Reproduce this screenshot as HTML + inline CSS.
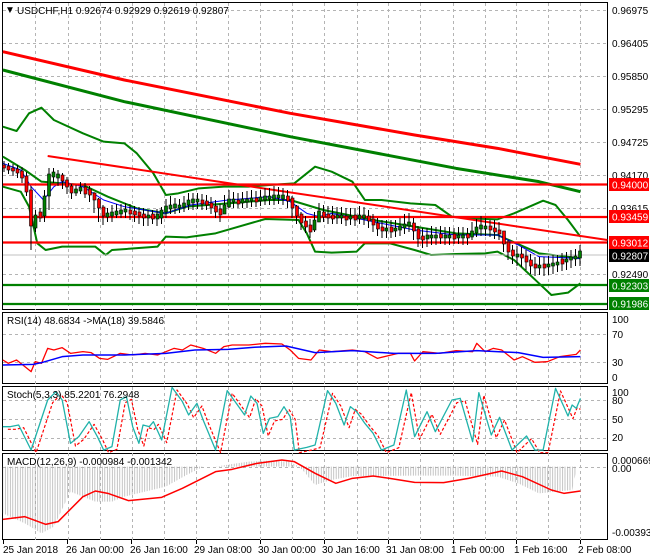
<!DOCTYPE html>
<html><head><meta charset="utf-8"><style>
html,body{margin:0;padding:0;background:#fff;}
svg{display:block;font-family:"Liberation Sans",sans-serif;}
</style></head><body>
<svg width="650" height="560" viewBox="0 0 650 560" xmlns="http://www.w3.org/2000/svg">
<defs>
<pattern id="hp" width="6" height="10" patternUnits="userSpaceOnUse"><rect x="0" y="0" width="1.6" height="10" fill="#a8a8a8"/></pattern>
</defs>
<rect width="650" height="560" fill="#fff"/>
<g fill="none" stroke="#000" stroke-width="1">
<rect x="2.5" y="2.5" width="605" height="307"/>
<rect x="2.5" y="312.5" width="605" height="71"/>
<rect x="2.5" y="386.5" width="605" height="64"/>
<rect x="2.5" y="453.5" width="605" height="86"/>
</g>
<g stroke="#b4b4b4" stroke-dasharray="3,3" stroke-width="1">
<line x1="3" x2="607" y1="10.5" y2="10.5"/><line x1="3" x2="607" y1="43.5" y2="43.5"/><line x1="3" x2="607" y1="76.5" y2="76.5"/><line x1="3" x2="607" y1="109.5" y2="109.5"/><line x1="3" x2="607" y1="142.5" y2="142.5"/><line x1="3" x2="607" y1="175.5" y2="175.5"/><line x1="3" x2="607" y1="208.5" y2="208.5"/><line x1="3" x2="607" y1="274.5" y2="274.5"/>
<line x1="3" x2="607" y1="334.5" y2="334.5"/><line x1="3" x2="607" y1="362.5" y2="362.5"/>
<line x1="3" x2="607" y1="400.5" y2="400.5"/><line x1="3" x2="607" y1="419.5" y2="419.5"/><line x1="3" x2="607" y1="438.5" y2="438.5"/>
<line x1="3" x2="607" y1="467.5" y2="467.5"/>
<path d="M35.5 3V540M68.5 3V540M100.5 3V540M132.5 3V540M164.5 3V540M196.5 3V540M228.5 3V540M260.5 3V540M292.5 3V540M324.5 3V540M357.5 3V540M388.5 3V540M420.5 3V540M453.5 3V540M485.5 3V540M516.5 3V540M548.5 3V540M580.5 3V540"/>
</g>
<g fill="#fff"><rect x="0" y="310" width="607" height="2"/><rect x="0" y="384" width="607" height="2"/><rect x="0" y="451" width="607" height="2"/></g>
<g transform="scale(0.41459,0.33333)" fill="none" stroke-linejoin="round">
<polyline vector-effect="non-scaling-stroke" stroke="#ff0000" stroke-width="3" points="7,155 300,240 700,340 1000,405 1200,445 1400,493"/>
<polyline vector-effect="non-scaling-stroke" stroke="#008000" stroke-width="3" points="7,210 300,305 700,410 1100,505 1300,545 1400,575"/>
<polyline vector-effect="non-scaling-stroke" stroke="#008000" stroke-width="2" points="7,380 40,393 70,340 100,323 130,360 200,400 250,425 300,430 330,460 370,520 400,585 430,580 480,565 540,560 600,560 650,555 710,550 760,500 800,515 850,545 880,600 920,600 990,610 1050,615 1090,650 1130,655 1200,658 1240,640 1310,602 1340,615 1370,660 1400,710"/>
<polyline vector-effect="non-scaling-stroke" stroke="#008000" stroke-width="2" points="7,560 50,575 70,620 90,730 110,750 150,740 230,740 255,765 270,750 380,740 400,710 450,712 520,700 640,657 720,660 740,700 760,755 800,758 860,755 880,730 940,730 1000,750 1040,765 1100,762 1170,760 1200,755 1240,780 1300,850 1330,885 1370,878 1400,850"/>
<polyline vector-effect="non-scaling-stroke" stroke="#008000" stroke-width="2" points="7,470 60,510 100,545 150,550 200,555 260,590 330,625 400,640 450,620 550,610 650,600 700,600 780,630 900,660 1000,680 1100,700 1200,705 1300,760 1400,775"/>
<polyline vector-effect="non-scaling-stroke" stroke="#0000ff" stroke-width="1" points="7,490 50,510 75,560 105,600 130,560 150,545 200,560 250,600 300,620 350,630 400,640 460,615 550,600 650,590 700,605 740,640 770,650 800,640 900,665 1000,690 1100,705 1200,705 1250,735 1300,770 1400,775"/>
<polyline vector-effect="non-scaling-stroke" stroke="#ff0000" stroke-width="2" points="115,468 1465,720"/>
</g>
<line x1="3" x2="607" y1="255" y2="255" stroke="#c0c0c0"/>
<g stroke-width="2.2">
<line x1="3" x2="607" y1="184.5" y2="184.5" stroke="#ff0000"/>
<line x1="3" x2="607" y1="217" y2="217" stroke="#ff0000"/>
<line x1="3" x2="607" y1="242.5" y2="242.5" stroke="#ff0000"/>
<line x1="3" x2="607" y1="285" y2="285" stroke="#008000"/>
<line x1="3" x2="607" y1="304" y2="304" stroke="#008000"/>
</g>
<!-- candles -->
<path fill="none" stroke="#000" stroke-width="1" d="M4 161V172M8.5 163V174M13 164V176M17.5 165V178M22 167V183M26.5 172V196M31 186V250M35.5 210V232M40 208V222M44.5 190V222M49 168V210M53.5 168V183M58 170V186M62.5 173V189M67 177V194M71.5 184V199M76 185V196M80.5 182V194M85 183V198M89.5 186V202M94 192V213M98.5 198V222M103 205V225M107.5 208V222M112 205V222M116.5 204V218M121 204V218M125.5 203V218M130 204V220M134.5 206V222M139 207V224M143.5 208V226M148 210V226M152.5 210V224M157 209V226M161.5 207V224M166 199V218M170.5 196V214M175 198V214M179.5 199V213M184 196V212M188.5 193V210M193 193V210M197.5 193V209M202 194V210M206.5 195V210M211 197V214M215.5 200V218M220 204V222M224.5 195V214M229 190V208M233.5 192V208M238 193V208M242.5 192V208M247 191V208M251.5 190V207M256 191V207M260.5 190V206M265 188V205M269.5 188V205M274 186V205M278.5 187V204M283 188V205M287.5 190V208M292 196V218M296.5 205V224M301 212V230M305.5 216V233M310 219V238M314.5 212V232M319 203V222M323.5 205V222M328 206V224M332.5 206V224M337 207V224M341.5 207V224M346 208V226M350.5 208V225M355 208V226M359.5 206V224M364 207V225M368.5 210V228M373 214V232M377.5 218V236M382 220V238M386.5 220V238M391 220V238M395.5 220V237M400 218V236M404.5 214V234M409 213V232M413.5 218V240M418 226V247M422.5 228V248M427 228V247M431.5 226V245M436 227V245M440.5 226V244M445 227V245M449.5 227V245M454 228V244M458.5 227V244M463 227V245M467.5 228V245M472 222V240M476.5 219V237M481 216V236M485.5 218V236M490 220V237M494.5 220V239M499 222V240M503.5 232V252M508 240V260M512.5 245V264M517 246V266M521.5 247V267M526 250V270M530.5 254V274M535 257V276M539.5 257V275M544 257V276M548.5 256V275M553 255V274M557.5 255V272M562 253V271M566.5 252V270M571 250V268M575.5 249V266M580 245V266"/>
<g stroke="#000" stroke-width="0.6">
<g fill="#ff0000">
<rect x="2.5" y="165" width="3" height="3"/><rect x="7" y="166" width="3" height="4"/><rect x="11.5" y="168" width="3" height="3"/><rect x="16" y="169" width="3" height="4"/><rect x="20.5" y="171" width="3" height="7"/><rect x="25" y="176" width="3" height="16"/><rect x="29.5" y="190" width="3" height="36"/><rect x="39" y="212" width="3" height="6"/><rect x="61" y="175" width="3" height="6"/><rect x="65.5" y="180" width="3" height="7"/><rect x="70" y="186" width="3" height="7"/><rect x="84" y="187" width="3" height="7"/><rect x="88.5" y="189" width="3" height="6"/><rect x="93" y="193" width="3" height="7"/><rect x="97.5" y="199" width="3" height="9"/><rect x="102" y="207" width="3" height="9"/><rect x="129" y="210" width="3" height="4"/><rect x="133.5" y="211" width="3" height="4"/><rect x="138" y="212" width="3" height="4"/><rect x="142.5" y="214" width="3" height="4"/><rect x="151.5" y="214" width="3" height="5"/><rect x="201" y="200" width="3" height="4"/><rect x="205.5" y="201" width="3" height="4"/><rect x="210" y="203" width="3" height="5"/><rect x="214.5" y="206" width="3" height="6"/><rect x="219" y="209" width="3" height="6"/><rect x="237" y="200" width="3" height="4"/><rect x="255" y="198" width="3" height="4"/><rect x="286.5" y="196" width="3" height="5"/><rect x="291" y="198" width="3" height="10"/><rect x="295.5" y="206" width="3" height="10"/><rect x="300" y="214" width="3" height="9"/><rect x="304.5" y="221" width="3" height="6"/><rect x="309" y="225" width="3" height="7"/><rect x="322.5" y="212" width="3" height="5"/><rect x="327" y="214" width="3" height="4"/><rect x="331.5" y="215" width="3" height="4"/><rect x="345" y="216" width="3" height="4"/><rect x="354" y="215" width="3" height="5"/><rect x="367.5" y="216" width="3" height="5"/><rect x="372" y="219" width="3" height="6"/><rect x="376.5" y="223" width="3" height="6"/><rect x="381" y="227" width="3" height="4"/><rect x="390" y="227" width="3" height="5"/><rect x="412.5" y="223" width="3" height="8"/><rect x="417" y="229" width="3" height="10"/><rect x="421.5" y="236" width="3" height="4"/><rect x="439.5" y="234" width="3" height="4"/><rect x="453" y="234" width="3" height="5"/><rect x="466.5" y="234" width="3" height="4"/><rect x="489" y="226" width="3" height="4"/><rect x="493.5" y="228" width="3" height="4"/><rect x="498" y="230" width="3" height="4"/><rect x="502.5" y="231" width="3" height="13"/><rect x="507" y="242" width="3" height="10"/><rect x="511.5" y="250" width="3" height="6"/><rect x="520.5" y="254" width="3" height="4"/><rect x="525" y="256" width="3" height="6"/><rect x="529.5" y="260" width="3" height="6"/><rect x="534" y="264" width="3" height="4"/><rect x="543" y="264" width="3" height="4"/><rect x="561" y="259" width="3" height="5"/>
</g>
<g fill="#008000">
<rect x="34" y="215" width="3" height="13"/><rect x="43" y="196" width="3" height="20"/><rect x="47.5" y="174" width="3" height="22"/><rect x="52" y="172" width="3" height="5"/><rect x="56.5" y="174" width="3" height="4"/><rect x="74.5" y="189" width="3" height="4"/><rect x="79" y="187" width="3" height="4"/><rect x="106" y="213" width="3" height="4"/><rect x="110.5" y="212" width="3" height="4"/><rect x="115" y="211" width="3" height="4"/><rect x="119.5" y="210" width="3" height="4"/><rect x="124" y="209" width="3" height="3"/><rect x="147" y="215" width="3" height="3"/><rect x="156" y="214" width="3" height="5"/><rect x="160" y="210" width="3" height="8"/><rect x="164.5" y="206" width="3" height="6"/><rect x="169" y="205" width="3" height="4"/><rect x="173.5" y="204" width="3" height="4"/><rect x="178" y="205" width="3" height="3"/><rect x="182.5" y="203" width="3" height="4"/><rect x="187" y="200" width="3" height="5"/><rect x="191.5" y="199" width="3" height="4"/><rect x="196" y="199" width="3" height="3"/><rect x="223" y="205" width="3" height="9"/><rect x="227.5" y="199" width="3" height="8"/><rect x="232" y="199" width="3" height="3"/><rect x="241" y="199" width="3" height="4"/><rect x="245.5" y="199" width="3" height="3"/><rect x="250" y="198" width="3" height="3"/><rect x="259" y="197" width="3" height="4"/><rect x="263.5" y="196" width="3" height="4"/><rect x="268" y="196" width="3" height="3"/><rect x="272.5" y="195" width="3" height="4"/><rect x="277" y="195" width="3" height="3"/><rect x="281.5" y="195" width="3" height="4"/><rect x="313" y="220" width="3" height="10"/><rect x="317.5" y="211" width="3" height="11"/><rect x="336" y="215" width="3" height="3"/><rect x="340" y="215" width="3" height="3"/><rect x="349" y="216" width="3" height="3"/><rect x="358" y="215" width="3" height="4"/><rect x="362.5" y="215" width="3" height="3"/><rect x="385" y="228" width="3" height="3"/><rect x="394" y="228" width="3" height="3"/><rect x="398.5" y="226" width="3" height="4"/><rect x="403" y="224" width="3" height="4"/><rect x="407.5" y="222" width="3" height="4"/><rect x="426" y="235" width="3" height="4"/><rect x="430" y="235" width="3" height="3"/><rect x="434.5" y="235" width="3" height="3"/><rect x="444" y="235" width="3" height="3"/><rect x="448" y="235" width="3" height="3"/><rect x="457" y="235" width="3" height="3"/><rect x="461.5" y="235" width="3" height="3"/><rect x="470.5" y="231" width="3" height="6"/><rect x="475" y="227" width="3" height="6"/><rect x="479.5" y="225" width="3" height="4"/><rect x="484" y="226" width="3" height="3"/><rect x="516" y="254" width="3" height="3"/><rect x="538" y="265" width="3" height="3"/><rect x="547" y="264" width="3" height="3"/><rect x="551.5" y="263" width="3" height="3"/><rect x="556" y="262" width="3" height="3"/><rect x="565" y="259" width="3" height="3"/><rect x="569.5" y="257" width="3" height="3"/><rect x="574" y="256" width="3" height="3"/><rect x="578.5" y="251" width="3" height="7"/>
</g>
</g>
<!-- indicators -->
<g transform="translate(0,310) scale(0.41459,0.33333)" fill="none" stroke-linejoin="round">
<polyline vector-effect="non-scaling-stroke" stroke="#ff0000" stroke-width="1.3" points="7,150 20,160 40,150 60,170 75,185 85,155 100,160 115,115 130,120 150,113 170,130 200,125 220,128 240,145 260,148 290,130 320,135 350,130 380,135 400,125 420,115 440,120 460,105 490,115 520,130 540,110 560,105 600,105 640,100 680,102 700,120 720,145 750,150 770,120 800,125 850,120 880,125 910,145 960,130 990,130 1000,153 1020,125 1060,130 1100,122 1140,125 1150,100 1170,125 1190,115 1210,120 1240,150 1260,140 1290,157 1320,155 1350,140 1390,133 1400,120"/>
<polyline vector-effect="non-scaling-stroke" stroke="#0000ff" stroke-width="1.5" points="7,165 80,163 100,158 150,140 200,135 300,135 400,130 470,120 550,118 610,112 690,108 760,128 850,122 950,130 1050,130 1150,122 1250,128 1310,142 1400,140"/>
<polyline vector-effect="non-scaling-stroke" stroke="#ff0000" stroke-width="1.2" stroke-dasharray="3,2" transform="translate(12,8)" points="7,350 25,350 45,345 75,420 115,270 135,245 150,270 170,400 190,380 215,335 235,380 250,420 270,410 290,270 305,260 320,350 335,400 345,345 360,350 370,335 390,390 415,232 440,275 455,315 475,280 490,330 520,420 548,242 570,280 590,315 605,258 620,280 635,370 650,325 670,320 685,290 700,320 710,420 740,412 760,405 790,242 810,280 830,345 845,290 860,305 880,340 900,370 920,420 950,405 980,240 1000,380 1030,305 1050,365 1090,270 1110,265 1140,395 1155,248 1185,375 1205,322 1235,420 1270,378 1290,420 1310,420 1340,235 1360,290 1370,318 1380,285 1388,290"/>
<polyline vector-effect="non-scaling-stroke" stroke="#20b2aa" stroke-width="1.3" points="7,350 25,350 45,345 75,420 115,270 135,245 150,270 170,400 190,380 215,335 235,380 250,420 270,410 290,270 305,260 320,350 335,400 345,345 360,350 370,335 390,390 415,232 440,275 455,315 475,280 490,330 520,420 548,242 570,280 590,315 605,258 620,280 635,370 650,325 670,320 685,290 700,320 710,420 740,412 760,405 790,242 810,280 830,345 845,290 860,305 880,340 900,370 920,420 950,405 980,240 1000,380 1030,305 1050,365 1090,270 1110,265 1140,395 1155,248 1185,375 1205,322 1235,420 1270,378 1290,420 1310,420 1340,235 1360,290 1370,318 1380,285 1390,295 1400,265"/>
<polygon fill="url(#hp)" stroke="none" points="7,470 7,610 60,640 100,670 130,650 170,545 230,575 270,575 300,560 350,545 400,530 450,495 490,470 520,470 560,462 600,455 650,452 700,455 720,470 730,480 760,525 800,510 850,498 1000,497 1100,497 1200,500 1250,520 1300,550 1380,540 1392,470"/>
<polyline vector-effect="non-scaling-stroke" stroke="#ff0000" stroke-width="1.5" points="7,628 60,620 110,643 140,635 200,560 230,543 260,550 310,572 390,562 440,535 520,485 560,478 620,460 680,450 710,455 760,490 810,520 850,505 900,498 940,505 1000,517 1070,518 1130,505 1210,483 1260,500 1330,540 1360,550 1400,543"/>
</g>
<g font-size="10" fill="#000">
<text x="5" y="13">▼</text>
<text x="17" y="14">USDCHF,H1  0.92674 0.92929 0.92619 0.92807</text>
<text x="7" y="324">RSI(14) 48.6834  -&gt;MA(18) 39.5846</text>
<text x="7" y="398">Stoch(5,3,3) 85.2201 76.2948</text>
<text x="7" y="465">MACD(12,26,9) -0.000984 -0.001342</text>
</g>
<g font-size="10" fill="#000">
<text x="612" y="14">0.96975</text><text x="612" y="47">0.96405</text><text x="612" y="80">0.95850</text><text x="612" y="113">0.95295</text><text x="612" y="146">0.94725</text><text x="612" y="179">0.94170</text><text x="612" y="212">0.93615</text><text x="612" y="278">0.92490</text>
<text x="612" y="323">100</text><text x="612" y="338">70</text><text x="612" y="366">30</text><text x="612" y="381">0</text>
<text x="612" y="396">100</text><text x="612" y="404">80</text><text x="612" y="423">50</text><text x="612" y="441">20</text>
<text x="612" y="464">0.000669</text><text x="612" y="472">0.00</text><text x="612" y="536">-0.003935</text>
</g>
<g font-size="10">
<rect x="609" y="178" width="40" height="13" fill="#ff0000"/><text x="612" y="188.5" fill="#fff">0.94000</text>
<rect x="609" y="210" width="40" height="13" fill="#ff0000"/><text x="612" y="220.5" fill="#fff">0.93459</text>
<rect x="609" y="236" width="40" height="13" fill="#ff0000"/><text x="612" y="246.5" fill="#fff">0.93012</text>
<rect x="609" y="249" width="40" height="13" fill="#000"/><text x="612" y="259.5" fill="#fff">0.92807</text>
<rect x="609" y="279" width="40" height="13" fill="#008000"/><text x="612" y="289.5" fill="#fff">0.92303</text>
<rect x="609" y="297" width="40" height="13" fill="#008000"/><text x="612" y="307.5" fill="#fff">0.91986</text>
</g>
<g font-size="10" fill="#000">
<text x="3" y="553">25 Jan 2018</text><text x="66" y="553">26 Jan 00:00</text><text x="130" y="553">26 Jan 16:00</text><text x="194" y="553">29 Jan 08:00</text><text x="258" y="553">30 Jan 00:00</text><text x="322" y="553">30 Jan 16:00</text><text x="386" y="553">31 Jan 08:00</text><text x="451" y="553">1 Feb 00:00</text><text x="514" y="553">1 Feb 16:00</text><text x="578" y="553">2 Feb 08:00</text>
</g>
<path stroke="#000" d="M3.5 540V544M67.5 540V544M131.5 540V544M196.5 540V544M260.5 540V544M324.5 540V544M388.5 540V544M453.5 540V544M516.5 540V544M580.5 540V544"/>
</svg>
</body></html>
